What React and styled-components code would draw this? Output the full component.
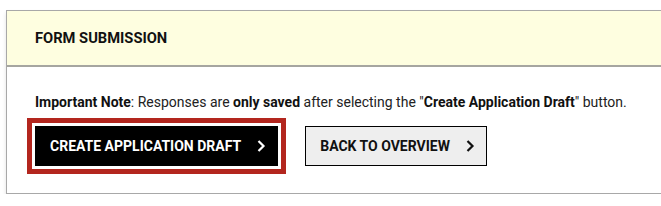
import React from "react";
import styled, { createGlobalStyle } from "styled-components";

const Global = createGlobalStyle`
  html, body { margin: 0; padding: 0; background: #fff; }
  body { font-family: Roboto, "Liberation Sans", sans-serif; color: #222; overflow: hidden; }
`;

const Page = styled.div`
  padding: 10px 0 0 6px;
`;

const Card = styled.section`
  width: 680px;
  border: 1px solid #a8a8a8;
  background: #fff;
  box-shadow: 0 3px 4px rgba(0,0,0,0.12);
`;

const Header = styled.div`
  background: #fefee0;
  border-bottom: 2px solid #a6a6a0;
  height: 54px;
  display: flex;
  align-items: center;
  padding-left: 28px;
`;

const Title = styled.h2`
  margin: 0;
  font-size: 14.7px;
  font-weight: 700;
  color: #111;
  text-transform: uppercase;
`;

const Body = styled.div`
  padding: 27px 28px 27px 28px;
`;

const Note = styled.p`
  margin: 0;
  font-size: 14px;
  line-height: 17px;
  color: #222;
  b { font-weight: 700; color: #111; }
`;

const Actions = styled.div`
  display: flex;
  gap: 27px;
  margin-top: 15px;
  align-items: center;
`;

const Button = styled.button`
  display: inline-flex;
  align-items: center;
  height: 40px;
  padding: 0 11px 0 14px;
  gap: 15px;
  font-family: Roboto, "Liberation Sans", sans-serif;
  font-size: 14px;
  font-weight: 700;
  text-transform: uppercase;
  cursor: pointer;
  background: ${p => (p.$primary ? "#000" : "#eeeeee")};
  color: ${p => (p.$primary ? "#fff" : "#111")};
  border: 1px solid #000;
  outline: ${p => (p.$focused ? "5px solid #b3261e" : "none")};
  outline-offset: 3px;
`;

const Chevron = () => (
  <svg width="10" height="14" viewBox="0 0 10 14" fill="none">
    <path d="M2.5 2 L7.5 7 L2.5 12" stroke="currentColor" strokeWidth="2.2" />
  </svg>
);

export default function App() {
  return (
    <>
      <Global />
      <Page>
        <Card>
          <Header>
            <Title>Form Submission</Title>
          </Header>
          <Body>
            <Note>
              <b>Important Note</b>: Responses are <b>only saved</b> after selecting the "<b>Create Application Draft</b>" button.
            </Note>
            <Actions>
              <Button $primary $focused>
                Create Application Draft <Chevron />
              </Button>
              <Button>
                Back to Overview <Chevron />
              </Button>
            </Actions>
          </Body>
        </Card>
      </Page>
    </>
  );
}
